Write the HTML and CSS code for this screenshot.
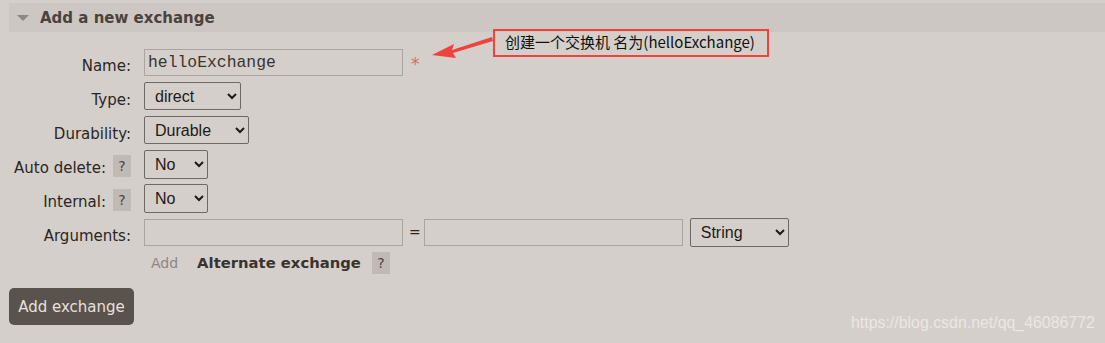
FILE: index.html
```html
<!DOCTYPE html>
<html lang="en">
  <head>
    <meta charset="UTF-8" />
    <title>Add a new exchange</title>
    <link rel="stylesheet" href="styles.css">
  </head>
  <body>
    <div class="section">
      <h2 class="section-head"><span class="toggle"></span>Add a new exchange</h2>

      <div class="form">
        <label class="form-label">Name:</label>
        <div class="form-field">
          <input type="text" class="text-input" value="helloExchange" />
          <span class="mand">*</span>
        </div>

        <label class="form-label">Type:</label>
        <div class="form-field">
          <select class="pick pick-type"><option>direct</option></select>
        </div>

        <label class="form-label">Durability:</label>
        <div class="form-field">
          <select class="pick pick-dur"><option>Durable</option></select>
        </div>

        <label class="form-label">Auto delete: <span class="help">?</span></label>
        <div class="form-field">
          <select class="pick pick-no"><option>No</option></select>
        </div>

        <label class="form-label">Internal: <span class="help">?</span></label>
        <div class="form-field">
          <select class="pick pick-no"><option>No</option></select>
        </div>

        <label class="form-label">Arguments:</label>
        <div class="form-field">
          <input type="text" class="text-input" />
          <span class="eq">=</span>
          <input type="text" class="text-input" />
          <select class="pick pick-str"><option>String</option></select>
        </div>

        <span></span>
        <div class="form-field args-extra">
          <span class="add-link">Add</span>
          <span class="alt">Alternate exchange</span>
          <span class="help">?</span>
        </div>
      </div>

      <button class="submit">Add exchange</button>
    </div>

    <div class="note">创建一个交换机 名为(helloExchange)</div>
    <svg class="arrow" width="70" height="30" viewBox="0 0 70 30">
      <path d="M62 4 L22 17 L24 11 L2 22 L26 25 L23 20 L63 8 Z" fill="#f0413d" />
    </svg>

    <div class="mark">https://blog.csdn.net/qq_46086772</div>
  </body>
</html>
```

FILE: styles.css
```css
body {
  margin: 0;
  padding: 3px 0 0 9px;
  background: #d4cfcb;
  font-family: "DejaVu Sans", Verdana, sans-serif;
  color: #2b2622;
  position: relative;
  height: 340px;
  overflow: hidden;
}
.section-head {
  margin: 0;
  height: 29px;
  display: flex;
  align-items: center;
  background: #ccc7c3;
  font-size: 15px;
  font-weight: bold;
  color: #4a433d;
  padding-left: 8px;
}
.toggle {
  width: 0;
  height: 0;
  border-left: 6px solid transparent;
  border-right: 6px solid transparent;
  border-top: 6px solid #8e8883;
  margin-right: 11px;
}
.form {
  display: grid;
  grid-template-columns: 124px auto;
  column-gap: 11px;
  grid-auto-rows: 34px;
  align-items: center;
  margin-top: 13px;
}
.form-label {
  text-align: right;
  font-size: 15px;
  display: flex;
  justify-content: flex-end;
  align-items: center;
  gap: 7px;
  white-space: nowrap;
  margin-left: -10px;
  margin-right: 2px;
  padding-top: 7px;
}
.form-field {
  display: flex;
  align-items: center;
}
.text-input {
  width: 259px;
  height: 27px;
  box-sizing: border-box;
  border: 1px solid #a9a5a1;
  background: #d4cfcb;
  font-family: "Liberation Mono", monospace;
  font-size: 16.4px;
  color: #3a332d;
  padding: 0 3px;
}
.mand {
  color: #d96a6a;
  margin-left: 8px;
  margin-top: 4px;
  font-size: 17px;
}
.eq {
  margin: 0 3px 0 6px;
  font-size: 14px;
}
.pick {
  height: 28px;
  border: 1px solid #6e6964;
  border-radius: 2px;
  background: #d4cfcb;
  font-family: "Liberation Sans", Arial, sans-serif;
  font-size: 16px;
  color: #1e1a17;
  padding: 0 4px 0 6px;
}
.pick-type { width: 97px; }
.pick-dur { width: 105px; }
.pick-no { width: 64px; height: 29px; }
.pick-str { width: 99px; height: 29px; margin-left: 7px; }
.help {
  display: inline-block;
  width: 18px;
  height: 22px;
  line-height: 22px;
  text-align: center;
  background: #bfbab6;
  color: #4a433d;
  font-size: 14px;
}
.form-label .help {
  margin-top: -4px;
}
.args-extra {
  margin-top: -7px;
}
.add-link {
  color: #8c8782;
  font-size: 14px;
  margin-left: 7px;
}
.alt {
  font-weight: bold;
  font-size: 14.8px;
  color: #3a332d;
  margin: 0 11px 0 19px;
}
.submit {
  margin-top: 5px;
  background: #5a524d;
  color: #e5e1dd;
  border: none;
  border-radius: 5px;
  font-family: "DejaVu Sans", Verdana, sans-serif;
  font-size: 15px;
  padding: 0 8px;
  height: 37px;
  width: 125px;
}
.note {
  position: absolute;
  left: 493px;
  top: 29px;
  width: 276px;
  height: 28px;
  box-sizing: border-box;
  border: 2px solid #f0413d;
  font-family: "Noto Sans CJK SC", sans-serif;
  font-size: 15px;
  color: #111;
  padding-left: 10px;
  line-height: 22px;
  white-space: nowrap;
}
.arrow {
  position: absolute;
  left: 430px;
  top: 33px;
}
.mark {
  position: absolute;
  left: 851px;
  top: 314px;
  font-family: "Liberation Sans", Arial, sans-serif;
  font-size: 15.9px;
  color: #ebe7e4;
}
```
